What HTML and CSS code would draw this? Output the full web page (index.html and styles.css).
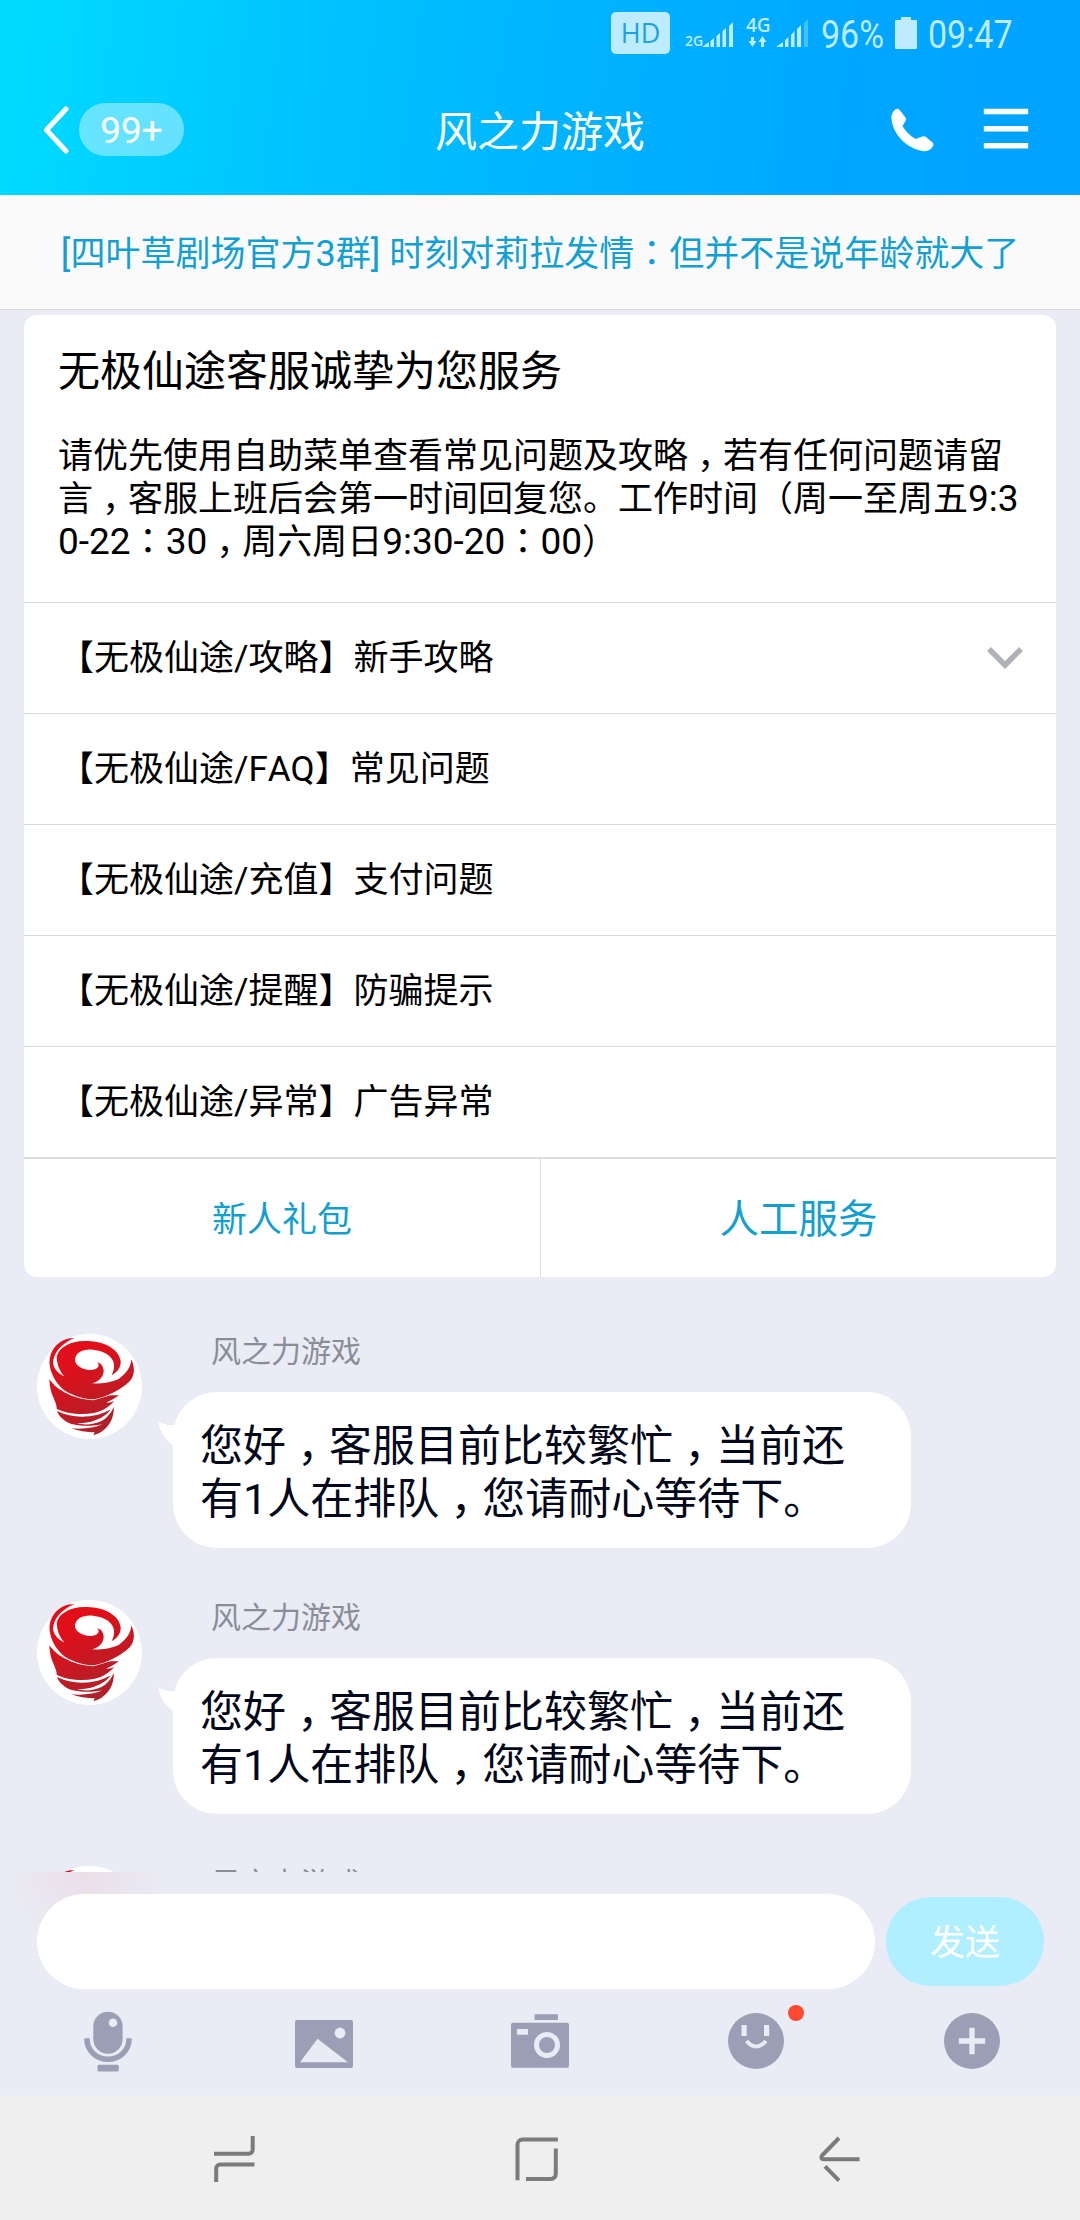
FILE: index.html
```html
<!DOCTYPE html>
<html lang="zh-CN">
<head>
<meta charset="utf-8">
<title>风之力游戏</title>
<link rel="stylesheet" href="styles.css">
</head>
<body>
<svg width="0" height="0" class="defs">
  <defs>
    <linearGradient id="red" gradientUnits="userSpaceOnUse" x1="90" y1="40" x2="220" y2="310"><stop offset=".2" stop-color="#e00f1a"/><stop offset="1" stop-color="#a9232c"/></linearGradient>
    <symbol id="tornado" viewBox="8 12 315 315">
      <circle cx="165.500" cy="169.500" r="157.500" fill="#fff"/>
      <g fill="url(#red)">
        <path d="M120 24C72 24 42 64 46 104C50 134 66 162 92 182C118 198 148 207 180 208C220 200 262 178 286 154C302 136 302 112 291 88C290 112 274 132 254 146C230 158 200 161 172 160C192 156 208 142 208 122C207 108 200 100 188 97C196 104 194 112 184 117C160 126 126 112 122 92C122 66 148 56 176 59C224 64 254 92 232 136C250 126 260 112 259 94C254 56 208 34 160 33C112 30 74 50 67 80C68 104 76 124 90 139C70 130 58 114 56 98C58 68 80 42 120 24Z"/>
        <path d="M45 148C68 182 120 208 178 211L228 196L254 196C240 206 228 212 216 218C224 219 232 217 240 214C216 238 196 246 178 249C140 256 94 250 67 236C68 226 62 216 58 204C50 190 46 170 45 148Z"/>
        <path d="M68 243C106 262 150 264 190 254C206 250 218 244 230 238C214 258 196 268 170 275C152 279 138 280 128 280C148 286 180 284 200 274C218 264 230 250 238 230C240 260 228 284 208 300C200 308 188 312 177 316L181 307C156 306 132 304 112 295C146 298 180 294 204 283C166 290 138 288 112 282C90 274 74 260 68 243Z"/>
      </g>
    </symbol>
  </defs>
</svg>
<div class="screen">
  <header class="header">
    <div class="status">
      <span class="hd">HD</span>
      <svg class="signals" width="126" height="40" viewBox="0 0 126 40">
        <g fill="#bdebff">
          <text x="0" y="33" class="net-small">2G</text>
          <path d="M17 34L24 29V34ZM25.500 34V28L29 25V34ZM31.500 34V23L35 20V34ZM37.500 34V18L41 15V34ZM44 34V13L48 9V34Z"/>
          <text x="61" y="19" class="net">4G</text>
          <path d="M66 24h3v4h2.500l-4 6l-4-6H66ZM76 34h3v-5h2.500l-4-6l-4 6H76Z"/>
          <path d="M91 34L98 29V34ZM100 34V27L103.500 24V34ZM106 34V22L109.500 18V34ZM112 34V16L116 12V34Z"/>
          <path d="M119 34V10L123 6V34Z" opacity=".35"/>
        </g>
      </svg>
      <span class="pct"><i>96%</i></span>
      <svg class="battery" width="22" height="32" viewBox="0 0 22 32"><path fill="#bdebff" d="M6 0h10v3h5a1 1 0 0 1 1 1v27a1 1 0 0 1-1 1H1a1 1 0 0 1-1-1V4a1 1 0 0 1 1-1h5Z"/></svg>
      <span class="time"><i>09:47</i></span>
    </div>
    <div class="titlebar">
      <div class="back">
        <svg width="28" height="48" viewBox="0 0 28 48"><path d="M24 3L4.500 24L24 45" fill="none" stroke="#fff" stroke-width="5" stroke-linecap="round" stroke-linejoin="round"/></svg>
        <span class="unread">99+</span>
      </div>
      <h1>风之力游戏</h1>
      <div class="actions">
        <svg width="44" height="44" viewBox="0 0 44 44"><path fill="#fff" d="M5 1Q7 0 8.500 1.700L14.500 9.500Q15.500 11 14.500 13L11.500 18Q16 26 24.500 31L30 29Q33 27.500 35 29L41.500 34.500Q43.500 36.500 41.500 39Q38 43.500 33 43.300C16 41 1 26 .3 9Q1 3.500 5 1Z"/></svg>
        <svg width="46" height="44" viewBox="0 0 46 44"><path stroke="#fff" stroke-width="5.400" stroke-linecap="square" d="M3.500 3.500h39M3.500 20.700h39M3.500 37.700h39"/></svg>
      </div>
    </div>
  </header>
  <div class="notice"><span class="num">[</span>四叶草剧场官方<span class="num">3</span>群<span class="num">] </span>时刻对莉拉发情<b class="colon" lang="zh-TW">：</b>但并不是说年龄就大了</div>
  <main class="chat">
    <section class="card">
      <div class="intro">
        <h2>无极仙途客服诚挚为您服务</h2>
        <p>请优先使用自助菜单查看常见问题及攻略<b class="comma" lang="zh-TW">，</b>若有任何问题请留<br>言<b class="comma" lang="zh-TW">，</b>客服上班后会第一时间回复您。工作时间（周一至周五<span class="num">9:3</span><br><span class="num">0-22</span><b class="colon" lang="zh-TW">：</b><span class="num">30</span><b class="comma" lang="zh-TW">，</b>周六周日<span class="num">9:30-20</span><b class="colon" lang="zh-TW">：</b><span class="num">00</span>）</p>
      </div>
      <div class="row"><span>【无极仙途/攻略】新手攻略</span><svg width="38" height="24" viewBox="0 0 38 24"><path d="M3 3L19 19L35 3" fill="none" stroke="#b0b2ba" stroke-width="5.500"/></svg></div>
      <div class="row"><span>【无极仙途/FAQ】常见问题</span></div>
      <div class="row"><span>【无极仙途/充值】支付问题</span></div>
      <div class="row"><span>【无极仙途/提醒】防骗提示</span></div>
      <div class="row"><span>【无极仙途/异常】广告异常</span></div>
      <div class="buttons"><span>新人礼包</span><span class="big">人工服务</span></div>
    </section>
    <article class="msg">
      <svg class="avatar"><use href="#tornado"/></svg>
      <div>
        <div class="name">风之力游戏</div>
        <div class="bubble"><svg class="tail" width="22" height="30" viewBox="0 0 22 30"><path fill="#fff" d="M1 1Q8 6 18 5L22 28Q5 21 1 1Z"/></svg>您好<b class="comma" lang="zh-TW">，</b>客服目前比较繁忙<b class="comma" lang="zh-TW">，</b>当前还<br>有1人在排队<b class="comma" lang="zh-TW">，</b>您请耐心等待下。</div>
      </div>
    </article>
    <article class="msg">
      <svg class="avatar"><use href="#tornado"/></svg>
      <div>
        <div class="name">风之力游戏</div>
        <div class="bubble"><svg class="tail" width="22" height="30" viewBox="0 0 22 30"><path fill="#fff" d="M1 1Q8 6 18 5L22 28Q5 21 1 1Z"/></svg>您好<b class="comma" lang="zh-TW">，</b>客服目前比较繁忙<b class="comma" lang="zh-TW">，</b>当前还<br>有1人在排队<b class="comma" lang="zh-TW">，</b>您请耐心等待下。</div>
      </div>
    </article>
    <article class="msg">
      <svg class="avatar"><use href="#tornado"/></svg>
      <div><div class="name">风之力游戏</div></div>
    </article>
  </main>
  <footer class="composer">
    <div class="entry"><div class="field"></div><div class="send">发送</div></div>
    <div class="tools">
      <svg viewBox="0 0 72 72"><g fill="#9a9fb6"><rect x="21.300" y="6.700" width="29.300" height="42" rx="14.600"/><rect x="25.500" y="59.700" width="21.300" height="6.800" rx="1.500"/></g><circle cx="41" cy="17.700" r="4.300" fill="#e9ecf5"/><path d="M15 33.300v1a21 20 0 0 0 42 0v-1" fill="none" stroke="#9a9fb6" stroke-width="5.500"/></svg>
      <svg viewBox="0 0 72 72"><rect x="7" y="15" width="58" height="48" rx="2" fill="#9a9fb6"/><circle cx="52" cy="28" r="5.400" fill="#e9ecf5"/><path d="M29.500 33.700L12 57.300H60Z" fill="#e9ecf5"/></svg>
      <svg viewBox="0 0 72 72"><rect x="7" y="17.700" width="58" height="45" rx="2" fill="#9a9fb6"/><rect x="30.500" y="9.300" width="23.500" height="5.700" rx="1" fill="#9a9fb6"/><rect x="13" y="24" width="11" height="5.700" fill="#e9ecf5"/><circle cx="43" cy="40" r="10.500" fill="none" stroke="#e9ecf5" stroke-width="5"/></svg>
      <div class="emoji"><svg viewBox="0 0 72 72"><circle cx="36" cy="36" r="28" fill="#9a9fb6"/><path d="M21.500 20h5.200v11h-5.200ZM44 20h5.200v11H44Z" fill="#e9ecf5"/><path d="M26.500 36Q36 47 46 36" fill="none" stroke="#e9ecf5" stroke-width="4"/></svg><i class="dot"></i></div>
      <svg viewBox="0 0 72 72"><circle cx="36" cy="36" r="28" fill="#9a9fb6"/><path d="M22.800 36h26.400M36 22.800v26.400" stroke="#e9ecf5" stroke-width="5.300"/></svg>
    </div>
  </footer>
  <nav class="nav">
    <svg viewBox="0 0 48 48"><path d="M4 18.700H38.700a4 4 0 0 0 4-4V1M44.500 29.600H10.200a4 4 0 0 0-4 4V47"/></svg>
    <svg viewBox="0 0 48 48"><path d="M4.500 45.300V9.600a5 5 0 0 1 5-5H44.900M42.800 13.600V39a5 5 0 0 1-5 5H13"/></svg>
    <svg viewBox="0 0 48 48"><path d="M24 3L7 20.500Q5 24.300 9 24.300H44.600M10 31.300L24 45.600"/></svg>
  </nav>
</div>
</body>
</html>
```
FILE: styles.css
```css
* { box-sizing: border-box; }
body { margin: 0; font-family: Roboto, "Noto Sans CJK SC", sans-serif; font-kerning: none; }
h1, h2, p { margin: 0; font-weight: 400; }
b { font-weight: inherit; }
i { font-style: normal; }
.defs { position: absolute; }
.screen { width: 1080px; height: 2220px; display: flex; flex-direction: column; overflow: hidden; background: #e9ecf4; white-space: nowrap; }
.comma, .colon { font-family: "Noto Sans CJK TC", sans-serif; line-height: 0; }
.comma { vertical-align: -.3em; }
.num { font-size: 36px; line-height: 0; }

.header { height: 195px; flex: none; background: linear-gradient(97deg, #00dcff 0%, #00c4ff 28%, #00b2ff 55%, #00a6ff 80%, #00a3ff 100%); }
.status { height: 66px; padding-left: 611px; display: flex; align-items: center; color: #bdebff; }
.hd { width: 59px; height: 42px; border-radius: 5px; background: #bdebff; color: #1ba3dd; font: 500 27px/42px "Open Sans", sans-serif; text-align: center; }
.signals { margin-left: 15px; overflow: visible; }
.net-small { font: 600 14px "Open Sans", sans-serif; }
.net { font: 600 19px "Open Sans", sans-serif; }
.pct, .time { font-size: 39px; line-height: 66px; }
.pct i, .time i { display: inline-block; transform: scaleX(.87); transform-origin: 0 50%; }
.pct { width: 74px; margin-left: 10px; padding-top: 3px; }
.time { margin-left: 11px; padding-top: 3px; }
.titlebar { height: 129px; display: grid; grid-template-columns: 300px 1fr 300px; align-items: center; color: #fff; }
.back { height: 129px; padding: 0 0 2px 42px; display: flex; align-items: center; gap: 9px; }
.unread { width: 105px; height: 53px; border-radius: 27px; background: rgba(255,255,255,.4); font-size: 37px; line-height: 55px; text-align: center; }
.titlebar h1 { padding-top: 4px; font-size: 42px; line-height: 60px; text-align: center; }
.actions { padding: 0 51px 2px 0; display: flex; justify-content: flex-end; gap: 48px; }

.notice { height: 115px; flex: none; border-bottom: 1px solid #d9dade; background: #fafafa; color: #129fd3; font-size: 35px; line-height: 120px; text-align: center; }
.chat { height: 1562px; flex: none; overflow: hidden; padding: 5px 24px 0; }
.card { height: 962px; border-radius: 13px; background: #fff; color: #000; }
.intro { height: 287px; padding: 26px 34px 0; }
.intro h2 { font-size: 42px; line-height: 62px; }
.intro p { margin-top: 32px; font-size: 35px; line-height: 43px; }
.intro .num { font-size: 37px; }
.row { height: 111px; border-top: 1px solid #d8d9dc; padding: 0 32px 0 35px; display: flex; align-items: center; justify-content: space-between; font-size: 35px; line-height: 110px; }
.row span { padding-top: 2px; }
.buttons { height: 120px; border-top: 2px solid #dcdde0; display: grid; grid-template-columns: 1fr 1fr; color: #129fd0; font-size: 35px; line-height: 124px; text-align: center; }
.buttons .big { height: 118px; border-left: 1px solid #dcdde0; font-size: 39.500px; line-height: 121px; }

.msg { height: 266px; display: flex; color: #03081a; }
.card + .msg { margin-top: 57px; }
.avatar { width: 105px; height: 105px; margin-left: 13px; flex: none; }
.name { margin-left: 69px; font-size: 30px; line-height: 36px; color: #8a8d99; }
.bubble { position: relative; width: 738px; height: 156px; margin: 22px 0 0 31px; padding: 28px 27px 0; border-radius: 44px; background: #fff; font-size: 43px; line-height: 53px; }
.tail { position: absolute; left: -16px; top: 28px; }

.composer { height: 223px; flex: none; padding-top: 22px; background: radial-gradient(ellipse 85px 80px at 85px 0, rgba(238,205,214,.45), transparent), #e9ecf5; }
.entry { display: flex; align-items: center; gap: 11px; padding-left: 37px; }
.field { width: 838px; height: 95px; border-radius: 48px; background: #fff; }
.send { width: 158px; height: 89px; border-radius: 45px; background: #b0efff; color: #fff; font-size: 35px; line-height: 93px; text-align: center; }
.tools { height: 106px; padding-top: 16px; display: grid; grid-template-columns: repeat(5, 216px); justify-items: center; }
.tools svg { width: 72px; height: 72px; display: block; }
.emoji { position: relative; }
.dot { position: absolute; left: 68px; top: 0; width: 16px; height: 16px; border-radius: 50%; background: #fd4a2e; }
.nav { height: 125px; flex: none; padding: 40px 0 0 83px; display: grid; grid-template-columns: repeat(3, 302.500px); justify-items: center; background: #efefef; }
.nav svg { width: 48px; height: 48px; fill: none; stroke: #7b7b7b; stroke-width: 4; }
```
